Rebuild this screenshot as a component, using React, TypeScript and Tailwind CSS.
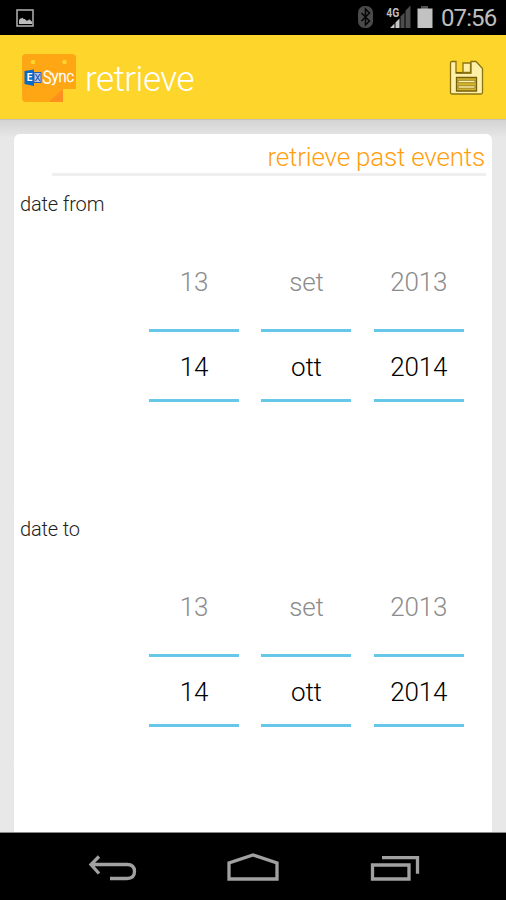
import React from "react";

const columns = [
  { previous: "13", current: "14" },
  { previous: "set", current: "ott" },
  { previous: "2013", current: "2014" },
];

function StatusBar() {
  return (
    <div className="flex h-[35px] shrink-0 items-center bg-black">
      <svg className="ml-4 h-[18px] w-[18px]" viewBox="0 0 18 18">
        <rect x="1" y="1" width="16" height="16" fill="none" stroke="#a8a8a8" strokeWidth="1.6" />
        <path d="M3 15v-3.500l1-2h1.500l1-1 1 1.500h1.500l1 1.500h2l1-1h1l1 1.500 1 .5v2.500z" fill="#bdbdbd" />
      </svg>
      <svg className="ml-auto h-[35px] w-[80px]" viewBox="0 0 80 35">
        <rect x="4" y="6" width="15" height="22" rx="6.5" fill="#4a4a4a" />
        <path d="M7.500 13l8 8-4 4V9l4 4-8 8" fill="none" stroke="#050505" strokeWidth="1.5" />
        <text
          x="32.200"
          y="16.500"
          fontSize="13"
          fontWeight="700"
          fill="#bdbdbd"
          textLength="13"
          lengthAdjust="spacingAndGlyphs"
          fontFamily="Roboto, sans-serif"
        >
          4G
        </text>
        <path d="M36 28l4.500-4.500V28zM41.500 28v-5.500l4-4V28z" fill="#c8c8c8" />
        <path d="M46.500 28V16.500l4-4V28zM51.500 28V10.500l5-5V28z" fill="#4d4d4d" />
        <path d="M67 6h7v3h-7z" fill="#505050" />
        <path d="M63.500 8.500h15V28h-15z" fill="#c2c2c2" />
      </svg>
      <span className="ml-[7px] mr-[8px] w-[57px] whitespace-nowrap pt-px text-[24px] font-normal leading-[34px] tracking-[-0.9px] text-[#bebebe]">
        07:56
      </span>
    </div>
  );
}

function Logo() {
  return (
    <svg className="mt-[2px] h-[48px] w-[54px]" viewBox="0 0 54 48">
      <path d="M4 0h46q4 0 4 4v31H41v13H4q-4 0-4-4V4q0-4 4-4z" fill="#ffa615" />
      <path d="M41 35v13H27z" fill="#ff8f1e" />
      <circle cx="11" cy="8" r="2.300" fill="#fdd52b" />
      <circle cx="42.500" cy="8" r="2.300" fill="#fdd52b" />
      <path d="M12 18.500h7v10h-7z" fill="#b9c6e5" stroke="#315fae" strokeWidth="1" />
      <path d="M13.500 20l4.500 7M18 20l-4.500 7" stroke="#315fae" strokeWidth="1.200" />
      <path d="M2.500 17L12 15.500v16.500L2.500 30z" fill="#086bc2" />
      <text x="4.700" y="27.200" fontSize="10" fontWeight="700" fill="#fff" fontFamily="Roboto, sans-serif">
        E
      </text>
      <g fill="#fff" stroke="#fff" strokeWidth=".5" fontFamily="Roboto, sans-serif">
        <text x="20.500" y="29.500" fontSize="18" transform="rotate(4 25 25)" textLength="9" lengthAdjust="spacingAndGlyphs">
          S
        </text>
        <text x="29.500" y="27.500" fontSize="16.500" textLength="22.500" lengthAdjust="spacingAndGlyphs">
          ync
        </text>
      </g>
    </svg>
  );
}

function SaveIcon() {
  return (
    <svg className="mt-px h-[36px] w-[36px]" viewBox="0 0 36 36">
      <path
        d="M3 1.500h4V13h15V1.500h5l6.500 7v24q0 1.500-1.500 1.500H3q-1.500 0-1.500-1.500V3Q1.500 1.500 3 1.500z"
        fill="#fff0a8"
        stroke="#8a7412"
        strokeWidth="1.300"
      />
      <path d="M7 12.700h15" stroke="#75600b" strokeWidth="1.500" />
      <path d="M14 3h7.500v9.500H14z" fill="#fff0a8" stroke="#8a7412" strokeWidth="1.300" />
      <path d="M7.500 17.500h20v13.500h-20z" fill="#d5b52c" stroke="#75600b" strokeWidth="1.300" />
      <path
        d="M9 20.300h17v2.400H9zM9 25.800h17v2.400H9z"
        fill="#fff0a8"
        stroke="#8a7412"
        strokeWidth=".8"
      />
    </svg>
  );
}

function DatePicker({ label }: { label: string }) {
  return (
    <section className="h-[325px] shrink-0 pt-4">
      <h3 className="pl-[6px] text-[20px] leading-6 tracking-[-0.15px] text-[#222]">{label}</h3>
      <div className="ml-[135px] grid w-[314.8px] grid-cols-3 gap-x-[22.4px] text-center text-[26px] tracking-[-0.2px]">
        {columns.map((column) => (
          <div key={column.current}>
            <div className="h-[113px] pt-[49px] leading-[34px] text-[#8c8c8c]">
              {column.previous}
            </div>
            <div className="h-[73px] border-y-[3px] border-[#67c7e8] pt-[18px] leading-[34px] text-black">
              {column.current}
            </div>
          </div>
        ))}
      </div>
    </section>
  );
}

function NavigationBar() {
  return (
    <nav className="flex h-[68px] shrink-0 items-center border-t border-[#888] bg-black">
      <svg className="h-[67px] w-full" viewBox="0 833 506 67" fill="none" stroke="#a1a1a1" strokeWidth="3.300">
        <path d="M91 864.500h36q7.500 0 7.500 7t-7.500 7H110M99 856.500l-8 8 8 9" />
        <path d="M229 879v-16l24-8 24 8v16z" />
        <path d="M372.500 865H409v14h-36.500zM382 857.700h35.500v16" />
      </svg>
    </nav>
  );
}

export default function App() {
  return (
    <div className="flex h-[900px] w-[506px] flex-col overflow-hidden bg-[#e8e8e8] font-[Roboto,sans-serif] font-light">
      <StatusBar />
      <header className="flex h-[84px] shrink-0 items-center bg-[#fdd52b] pl-[22px] pr-[21px]">
        <Logo />
        <h1 className="ml-[9px] pt-[5px] text-[35px] leading-[48px] tracking-[-0.5px] text-white">
          retrieve
        </h1>
        <button className="ml-auto" aria-label="Save">
          <SaveIcon />
        </button>
      </header>
      <main className="flex min-h-0 flex-1 flex-col border-t border-[#c6c0b8] bg-linear-to-b from-[#d3d3d3] to-[#e8e8e8] to-[18px] px-[14px] pt-[14px]">
        <div className="flex min-h-0 flex-1 flex-col overflow-hidden rounded-t-[6px] bg-white">
          <h2 className="ml-[38px] mr-[6px] h-[42px] shrink-0 border-b-[3px] border-[#efefef] pr-px pt-[6px] text-right text-[26px] leading-[34px] tracking-[-0.2px] text-[#ff9f0f]">
            retrieve past events
          </h2>
          <DatePicker label="date from" />
          <DatePicker label="date to" />
        </div>
      </main>
      <NavigationBar />
    </div>
  );
}
